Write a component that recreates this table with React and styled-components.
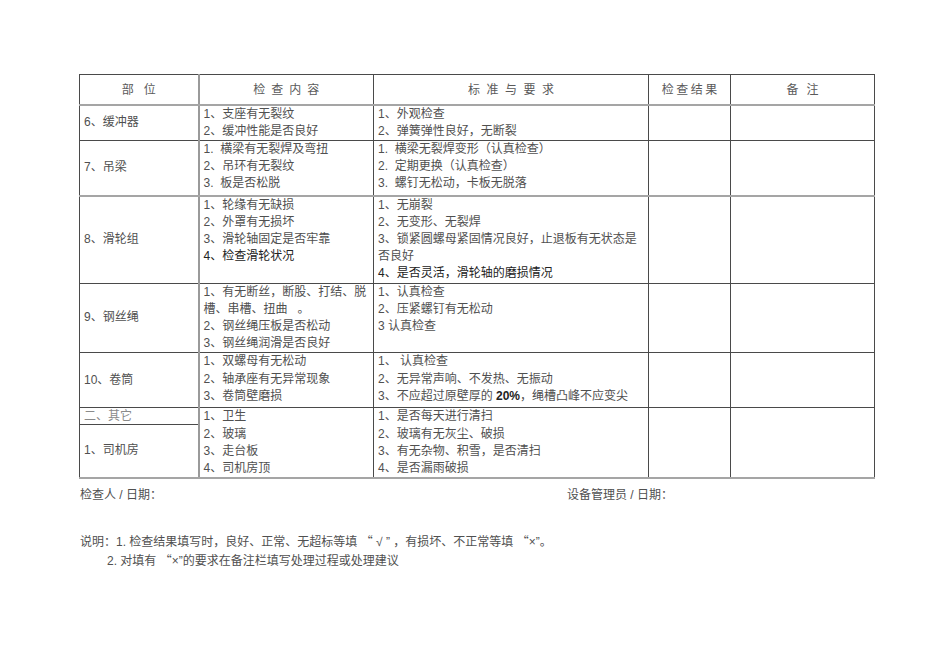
import React from "react";
import styled, { createGlobalStyle } from "styled-components";

const Global = createGlobalStyle`
  html, body { margin: 0; padding: 0; background: #fff; }
  body {
    font-family: "Liberation Sans", "Noto Sans CJK SC", sans-serif;
    font-size: 12px;
    color: #505050;
  }
`;

const Page = styled.main`
  width: 950px;
  min-height: 672px;
  box-sizing: border-box;
  padding: 74px 0 0 79px;
`;

const Sheet = styled.section`
  width: 795px;
`;

const Table = styled.table`
  width: 795px;
  table-layout: fixed;
  border-collapse: collapse;
  border: 1px solid #444;
`;

const Row = styled.tr`
  height: ${(p) => p.$h}px;
`;

const BaseCell = styled.td`
  border: 1px solid #4a4a4a;
  padding: 0 4px;
  line-height: 17.2px;
  font-size: 12px;
  white-space: nowrap;
  overflow: hidden;
  ${(p) => (p.$first ? "border-right: 2px solid #9a9a9a;" : "")}
  ${(p) => (p.$softBottom ? "border-bottom: 2px solid #a5a5a5;" : "")}
`;

const HeadCell = styled(BaseCell).attrs({ as: "th" })`
  font-weight: normal;
  text-align: center;
  vertical-align: middle;
  color: #5a5a5a;
  letter-spacing: ${(p) => p.$spacing}px;
  padding-left: ${(p) => p.$spacing + 4}px;
  padding-top: 3px;
  border-bottom: 2px solid #a5a5a5;
`;

const LabelCell = styled(BaseCell)`
  vertical-align: middle;
  color: ${(p) => (p.$muted ? "#8a8a8a" : "#505050")};
  line-height: ${(p) => (p.$muted ? "14px" : "17.2px")};
`;

const TextCell = styled(BaseCell)`
  vertical-align: top;
  white-space: normal;
`;

const EmptyCell = styled(BaseCell)``;

const Line = styled.div`
  color: ${(p) => (p.$dark ? "#222" : "inherit")};
  white-space: ${(p) => (p.$wrap ? "normal" : "nowrap")};
`;

const Num = styled.span`
  font-weight: bold;
  color: #222;
`;

const Signatures = styled.div`
  display: grid;
  grid-template-columns: 487px 1fr;
  margin-top: 8px;
  line-height: 17.4px;
  padding-left: 1px;
`;

const Notes = styled.div`
  margin-top: 27px;
  line-height: 17.4px;
  padding-left: 1px;
`;

const NoteLine = styled.div`
  padding-left: ${(p) => p.$indent || 0}px;
  white-space: nowrap;
`;

const WideQuote = styled.span`
  font-family: "Noto Sans CJK SC", sans-serif;
`;

const SP = "\u00a0\u00a0";

const rows = [
  {
    h: 36,
    label: "6、缓冲器",
    content: ["1、支座有无裂纹", "2、缓冲性能是否良好"],
    standard: ["1、外观检查", "2、弹簧弹性良好，无断裂"],
  },
  {
    h: 55,
    label: "7、吊梁",
    content: [`1.${SP}横梁有无裂焊及弯扭`, "2、吊环有无裂纹", `3.${SP}板是否松脱`],
    standard: [`1.${SP}横梁无裂焊变形（认真检查）`, `2.${SP}定期更换（认真检查）`, `3.${SP}螺钉无松动，卡板无脱落`],
    soft: true,
  },
  {
    h: 87,
    label: "8、滑轮组",
    content: ["1、轮缘有无缺损", "2、外罩有无损坏", "3、滑轮轴固定是否牢靠", { t: "4、检查滑轮状况", dark: true }],
    standard: [
      "1、无崩裂",
      "2、无变形、无裂焊",
      { t: "3、锁紧圆螺母紧固情况良好，止退板有无状态是否良好", wrap: true },
      { t: "4、是否灵活，滑轮轴的磨损情况", dark: true },
    ],
  },
  {
    h: 68,
    label: "9、钢丝绳",
    content: [
      { t: "1、有无断丝，断股、打结、脱槽、串槽、扭曲\u00a0\u00a0\u00a0。", wrap: true },
      "2、钢丝绳压板是否松动",
      "3、钢丝绳润滑是否良好",
    ],
    standard: ["1、认真检查", "2、压紧螺钉有无松动", "3 认真检查"],
  },
  {
    h: 55,
    label: "10、卷筒",
    content: ["1、双螺母有无松动", "2、轴承座有无异常现象", "3、卷筒壁磨损"],
    standard: [
      "1、\u00a0认真检查",
      "2、无异常声响、不发热、无振动",
      { t: "3、不应超过原壁厚的", num: " 20%", tail: "，绳槽凸峰不应变尖" },
    ],
  },
];

const renderLines = (lines) =>
  lines.map((l, i) => {
    if (typeof l === "string") return <Line key={i}>{l}</Line>;
    return (
      <Line key={i} $dark={l.dark} $wrap={l.wrap}>
        {l.t}
        {l.num && <Num>{l.num}</Num>}
        {l.tail && <span>{l.tail}</span>}
      </Line>
    );
  });

export default function App() {
  return (
    <>
      <Global />
      <Page>
        <Sheet>
          <Table>
            <colgroup>
              <col style={{ width: 119 }} />
              <col style={{ width: 175 }} />
              <col style={{ width: 275 }} />
              <col style={{ width: 82 }} />
              <col style={{ width: 144 }} />
            </colgroup>
            <thead>
              <Row $h={30}>
                <HeadCell $first $spacing={10}>部位</HeadCell>
                <HeadCell $spacing={6}>检查内容</HeadCell>
                <HeadCell $spacing={6.5}>标准与要求</HeadCell>
                <HeadCell $spacing={2.5}>检查结果</HeadCell>
                <HeadCell $spacing={8}>备注</HeadCell>
              </Row>
            </thead>
            <tbody>
              {rows.map((r) => (
                <Row key={r.label} $h={r.h}>
                  <LabelCell $first $softBottom={r.soft}>{r.label}</LabelCell>
                  <TextCell $softBottom={r.soft}>{renderLines(r.content)}</TextCell>
                  <TextCell $softBottom={r.soft}>{renderLines(r.standard)}</TextCell>
                  <EmptyCell $softBottom={r.soft} />
                  <EmptyCell $softBottom={r.soft} />
                </Row>
              ))}
              <Row $h={16}>
                <LabelCell $first $muted>二、其它</LabelCell>
                <TextCell rowSpan={2} $softBottom>
                  {renderLines(["1、卫生", "2、玻璃", "3、走台板", "4、司机房顶"])}
                </TextCell>
                <TextCell rowSpan={2} $softBottom>
                  {renderLines(["1、是否每天进行清扫", "2、玻璃有无灰尘、破损", "3、有无杂物、积雪，是否清扫", "4、是否漏雨破损"])}
                </TextCell>
                <EmptyCell rowSpan={2} $softBottom />
                <EmptyCell rowSpan={2} $softBottom />
              </Row>
              <Row $h={53}>
                <LabelCell $first $softBottom>1、司机房</LabelCell>
              </Row>
            </tbody>
          </Table>
          <Signatures>
            <span>检查人 / 日期：</span>
            <span>设备管理员 / 日期：</span>
          </Signatures>
          <Notes>
            <NoteLine>
              说明：1. 检查结果填写时，良好、正常、无超标等填 <WideQuote>“</WideQuote> √ ” ，有损坏、不正常等填 <WideQuote>“</WideQuote>×”。
            </NoteLine>
            <NoteLine $indent={27}>
              2. 对填有 <WideQuote>“</WideQuote>×”的要求在备注栏填写处理过程或处理建议
            </NoteLine>
          </Notes>
        </Sheet>
      </Page>
    </>
  );
}
